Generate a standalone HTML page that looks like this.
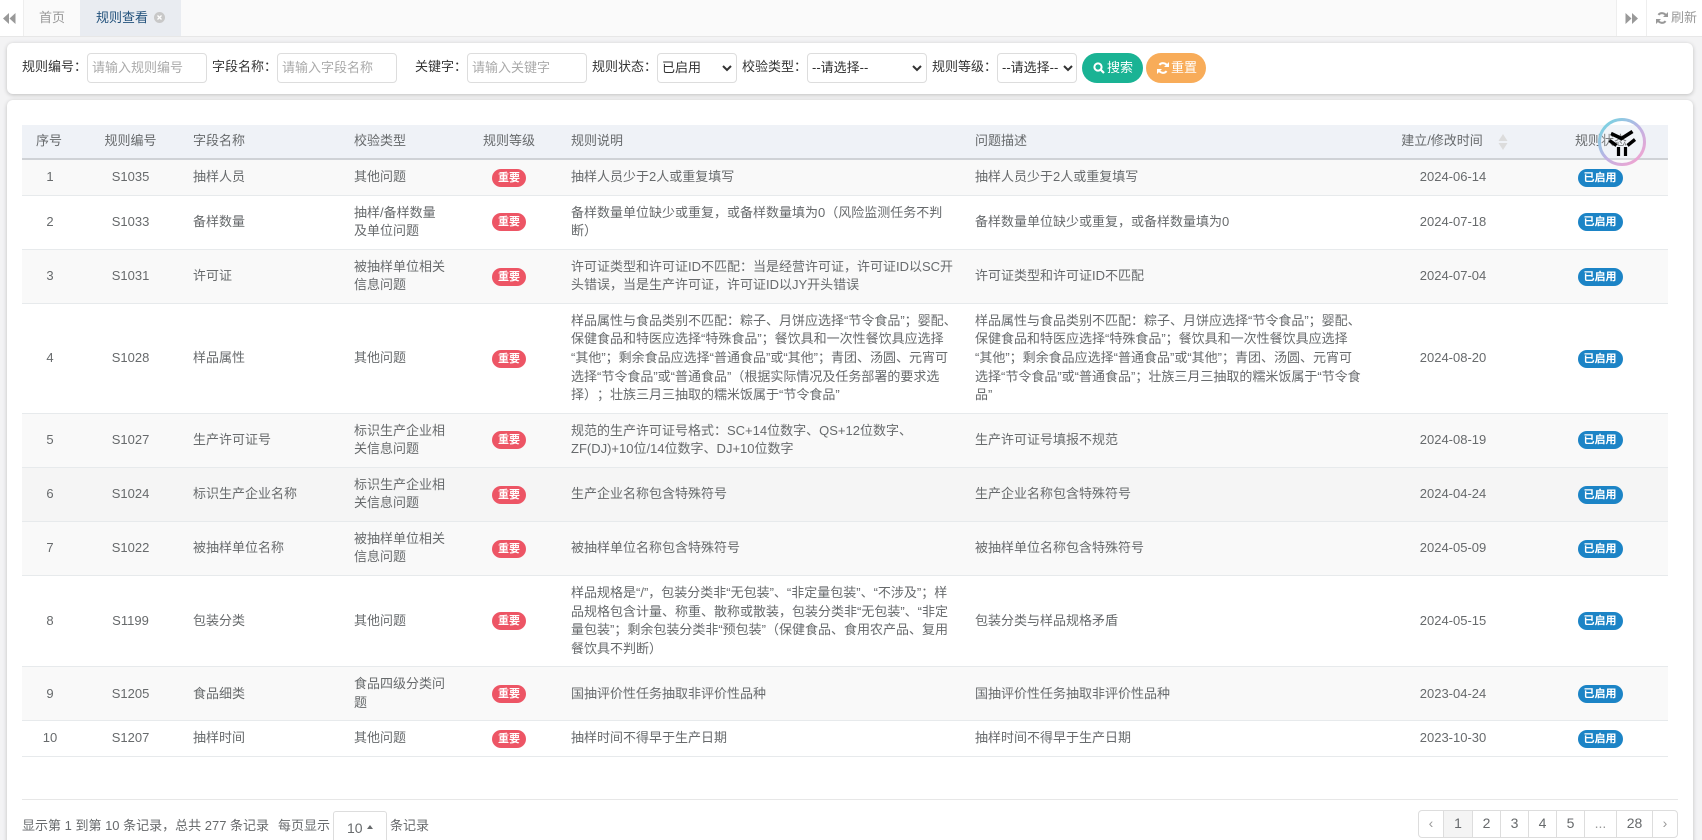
<!DOCTYPE html>
<html lang="zh">
<head>
<meta charset="utf-8">
<title>规则查看</title>
<style>
*{box-sizing:border-box}
html,body{margin:0;padding:0;width:1702px;height:840px;overflow:hidden;background:#f3f3f4}
body{font-family:"Liberation Sans","Noto Sans CJK SC",sans-serif;font-size:13px;color:#676a6c;position:relative;text-spacing-trim:space-all;font-feature-settings:"palt" 0}
.abs{position:absolute}
.top{left:0;top:0;width:1702px;height:37px;background:#fafafa;border-bottom:1px solid #e7e7e7}
.tw{top:0;height:36px;background:#fff}
.card{left:7px;width:1686px;background:#fff;border-radius:6px;box-shadow:0 1px 4px rgba(0,0,0,.22)}
.lb{top:57px;line-height:20px;color:#333;white-space:nowrap}
.in{top:53px;height:30px;border:1px solid #ddd;border-radius:4px;background:#fff;line-height:28px;padding-left:5px;color:#aaa;white-space:nowrap}
.in.ph{padding-left:4px}
.sel{color:#333;padding-left:4px}
.chev{position:absolute;right:4px;top:11px}
.btn{top:53px;height:30px;border-radius:15px;color:#fff;line-height:29px;white-space:nowrap}
table{position:absolute;left:22px;top:125px;width:1646px;border-collapse:collapse;table-layout:fixed;font-size:13px;line-height:18.57px}
th{height:34px;background:#eff2f7;border-bottom:2px solid #cfd2d6;font-weight:400;padding:0 8px;text-align:left;white-space:nowrap;color:#676a6c}
td{padding:8px;border-top:1px solid #e7eaec;vertical-align:middle;white-space:nowrap}
tbody tr:nth-child(odd) td{background:#f9f9f9}
tbody tr.hv td{background:#f5f5f5}
tbody tr:last-child td{border-bottom:1px solid #e7eaec}
tbody td:first-child{padding-left:10px}
.c{text-align:center}
.b{display:inline-block;font-size:11px;font-weight:700;color:#fff;line-height:12px;padding:3px 6px;border-radius:9px;vertical-align:middle}
.r{background:#ed5565}
.u{background:#1c84c6}
.pg{left:1418px;top:810px;width:260px;height:28px;border:1px solid #ddd;border-radius:4px;background:#fff}
.pg span{position:absolute;top:0;height:26px;line-height:25px;text-align:center;border-left:1px solid #ddd;font-size:14px}
.ft{top:816px;line-height:20px;white-space:nowrap}
</style>
</head>
<body>
<div class="abs top"></div>
<div class="abs tw" style="left:0;width:24px;border-right:1px solid #eee"></div>
<svg class="abs" style="left:3px;top:13px" width="13" height="11" viewBox="0 0 13 11"><path d="M6 0V11L0 5.500ZM12.500 0V11L6.500 5.500Z" fill="#999"/></svg>
<div class="abs" style="left:39px;top:8px;line-height:20px;color:#999">首页</div>
<div class="abs" style="left:80px;top:0;width:101px;height:36px;background:#e9ecf1"></div>
<div class="abs" style="left:96px;top:8px;line-height:20px;color:#23527c">规则查看</div>
<svg class="abs" style="left:154px;top:12px" width="11" height="11" viewBox="0 0 11 11"><circle cx="5.500" cy="5.500" r="5.500" fill="#c8c8c8"/><path d="M3.500 3.500L7.500 7.500M7.500 3.500L3.500 7.500" stroke="#fff" stroke-width="1.300"/></svg>
<div class="abs tw" style="left:1616px;width:86px;border-left:1px solid #eee"></div>
<div class="abs" style="left:1646px;top:0;width:1px;height:36px;background:#eee"></div>
<svg class="abs" style="left:1625px;top:13px" width="13" height="11" viewBox="0 0 13 11"><path d="M0.500 0V11L6.500 5.500ZM7 0V11L13 5.500Z" fill="#999"/></svg>
<svg class="abs" style="left:1656px;top:12px" width="12" height="12" viewBox="0 0 12 12"><path d="M10.300 4.200A4.600 4.600 0 0 0 2.400 2.900" fill="none" stroke="#999" stroke-width="2"/><path d="M1.700 7.800A4.600 4.600 0 0 0 9.600 9.100" fill="none" stroke="#999" stroke-width="2"/><path d="M12 0V5H7ZM0 12V7H5Z" fill="#999"/></svg>
<div class="abs" style="left:1671px;top:8px;line-height:20px;color:#999">刷新</div>

<div class="abs card" style="top:43px;height:51px"></div>
<div class="abs lb" style="left:22px">规则编号：</div>
<div class="abs in ph" style="left:87px;width:120px">请输入规则编号</div>
<div class="abs lb" style="left:212px">字段名称：</div>
<div class="abs in ph" style="left:277px;width:120px">请输入字段名称</div>
<div class="abs lb" style="left:415px">关键字：</div>
<div class="abs in ph" style="left:467px;width:120px">请输入关键字</div>
<div class="abs lb" style="left:592px">规则状态：</div>
<div class="abs in sel" style="left:657px;width:80px">已启用<svg class="chev" width="10" height="7" viewBox="0 0 10 7"><path d="M1 1L5 5L9 1" fill="none" stroke="#333" stroke-width="2"/></svg></div>
<div class="abs lb" style="left:742px">校验类型：</div>
<div class="abs in sel" style="left:807px;width:120px">--请选择--<svg class="chev" width="10" height="7" viewBox="0 0 10 7"><path d="M1 1L5 5L9 1" fill="none" stroke="#333" stroke-width="2"/></svg></div>
<div class="abs lb" style="left:932px">规则等级：</div>
<div class="abs in sel" style="left:997px;width:80px">--请选择--<svg class="chev" style="right:3px" width="10" height="7" viewBox="0 0 10 7"><path d="M1 1L5 5L9 1" fill="none" stroke="#333" stroke-width="2"/></svg></div>
<div class="abs btn" style="left:1082px;width:61px;background:#1ab394"><svg class="abs" style="left:11px;top:9px" width="12" height="12" viewBox="0 0 12 12"><circle cx="5" cy="5" r="3.600" fill="none" stroke="#fff" stroke-width="2"/><path d="M7.500 7.500L11 11" stroke="#fff" stroke-width="2.200"/></svg><span class="abs" style="left:25px">搜索</span></div>
<div class="abs btn" style="left:1146px;width:60px;background:#f8ac59"><svg class="abs" style="left:11px;top:9px" width="12" height="12" viewBox="0 0 12 12"><path d="M10.300 4.200A4.600 4.600 0 0 0 2.400 2.900" fill="none" stroke="#fff" stroke-width="2"/><path d="M1.700 7.800A4.600 4.600 0 0 0 9.600 9.100" fill="none" stroke="#fff" stroke-width="2"/><path d="M12 0V5H7ZM0 12V7H5Z" fill="#fff"/></svg><span class="abs" style="left:25px">重置</span></div>

<div class="abs card" style="top:100px;height:760px"></div>

<table>
<colgroup><col style="width:54px"><col style="width:109px"><col style="width:161px"><col style="width:109px"><col style="width:108px"><col style="width:404px"><col style="width:407px"><col style="width:158px"><col style="width:136px"></colgroup>
<thead><tr>
<th class="c">序号</th><th class="c">规则编号</th><th>字段名称</th><th>校验类型</th><th class="c">规则等级</th><th>规则说明</th><th>问题描述</th><th class="c" style="padding-right:30px">建立/修改时间</th><th class="c" style="padding-left:10px">规则状态</th>
</tr></thead>
<tbody>
<tr><td class="c">1</td><td class="c">S1035</td><td>抽样人员</td><td>其他问题</td><td class="c"><span class="b r">重要</span></td><td>抽样人员少于2人或重复填写</td><td>抽样人员少于2人或重复填写</td><td class="c">2024-06-14</td><td class="c"><span class="b u">已启用</span></td></tr>
<tr><td class="c">2</td><td class="c">S1033</td><td>备样数量</td><td>抽样/备样数量<br>及单位问题</td><td class="c"><span class="b r">重要</span></td><td>备样数量单位缺少或重复，或备样数量填为0（风险监测任务不判<br>断）</td><td>备样数量单位缺少或重复，或备样数量填为0</td><td class="c">2024-07-18</td><td class="c"><span class="b u">已启用</span></td></tr>
<tr><td class="c">3</td><td class="c">S1031</td><td>许可证</td><td>被抽样单位相关<br>信息问题</td><td class="c"><span class="b r">重要</span></td><td>许可证类型和许可证ID不匹配：当是经营许可证，许可证ID以SC开<br>头错误，当是生产许可证，许可证ID以JY开头错误</td><td>许可证类型和许可证ID不匹配</td><td class="c">2024-07-04</td><td class="c"><span class="b u">已启用</span></td></tr>
<tr><td class="c">4</td><td class="c">S1028</td><td>样品属性</td><td>其他问题</td><td class="c"><span class="b r">重要</span></td><td>样品属性与食品类别不匹配：粽子、月饼应选择“节令食品”；婴配、<br>保健食品和特医应选择“特殊食品”；餐饮具和一次性餐饮具应选择<br>“其他”；剩余食品应选择“普通食品”或“其他”；青团、汤圆、元宵可<br>选择“节令食品”或“普通食品”（根据实际情况及任务部署的要求选<br>择）；壮族三月三抽取的糯米饭属于“节令食品”</td><td>样品属性与食品类别不匹配：粽子、月饼应选择“节令食品”；婴配、<br>保健食品和特医应选择“特殊食品”；餐饮具和一次性餐饮具应选择<br>“其他”；剩余食品应选择“普通食品”或“其他”；青团、汤圆、元宵可<br>选择“节令食品”或“普通食品”；壮族三月三抽取的糯米饭属于“节令食<br>品”</td><td class="c">2024-08-20</td><td class="c"><span class="b u">已启用</span></td></tr>
<tr><td class="c">5</td><td class="c">S1027</td><td>生产许可证号</td><td>标识生产企业相<br>关信息问题</td><td class="c"><span class="b r">重要</span></td><td>规范的生产许可证号格式：SC+14位数字、QS+12位数字、<br>ZF(DJ)+10位/14位数字、DJ+10位数字</td><td>生产许可证号填报不规范</td><td class="c">2024-08-19</td><td class="c"><span class="b u">已启用</span></td></tr>
<tr class="hv"><td class="c">6</td><td class="c">S1024</td><td>标识生产企业名称</td><td>标识生产企业相<br>关信息问题</td><td class="c"><span class="b r">重要</span></td><td>生产企业名称包含特殊符号</td><td>生产企业名称包含特殊符号</td><td class="c">2024-04-24</td><td class="c"><span class="b u">已启用</span></td></tr>
<tr><td class="c">7</td><td class="c">S1022</td><td>被抽样单位名称</td><td>被抽样单位相关<br>信息问题</td><td class="c"><span class="b r">重要</span></td><td>被抽样单位名称包含特殊符号</td><td>被抽样单位名称包含特殊符号</td><td class="c">2024-05-09</td><td class="c"><span class="b u">已启用</span></td></tr>
<tr><td class="c">8</td><td class="c">S1199</td><td>包装分类</td><td>其他问题</td><td class="c"><span class="b r">重要</span></td><td>样品规格是“/”，包装分类非“无包装”、“非定量包装”、“不涉及”；样<br>品规格包含计量、称重、散称或散装，包装分类非“无包装”、“非定<br>量包装”；剩余包装分类非“预包装”（保健食品、食用农产品、复用<br>餐饮具不判断）</td><td>包装分类与样品规格矛盾</td><td class="c">2024-05-15</td><td class="c"><span class="b u">已启用</span></td></tr>
<tr><td class="c">9</td><td class="c">S1205</td><td>食品细类</td><td>食品四级分类问<br>题</td><td class="c"><span class="b r">重要</span></td><td>国抽评价性任务抽取非评价性品种</td><td>国抽评价性任务抽取非评价性品种</td><td class="c">2023-04-24</td><td class="c"><span class="b u">已启用</span></td></tr>
<tr><td class="c">10</td><td class="c">S1207</td><td>抽样时间</td><td>其他问题</td><td class="c"><span class="b r">重要</span></td><td>抽样时间不得早于生产日期</td><td>抽样时间不得早于生产日期</td><td class="c">2023-10-30</td><td class="c"><span class="b u">已启用</span></td></tr>
</tbody>
</table>

<svg class="abs" style="left:1498px;top:134px" width="10" height="16" viewBox="0 0 10 16"><path d="M5 0L9.500 7H0.500ZM5 16L0.500 9H9.500Z" fill="#dcdcdc"/></svg>

<svg class="abs" style="left:1596px;top:116px" width="52" height="52" viewBox="0 0 52 52">
<defs><linearGradient id="g" x1="0.150" y1="0.100" x2="0.850" y2="0.900"><stop offset="0" stop-color="#7fd0e2"/><stop offset="0.500" stop-color="#bcb3e4"/><stop offset="1" stop-color="#eca6d3"/></linearGradient></defs>
<circle cx="26" cy="26" r="22.500" fill="rgba(255,255,255,.15)" stroke="url(#g)" stroke-width="3"/>
<path d="M15 17.500L25.500 22.500L36.500 15.500" fill="none" stroke="#000" stroke-width="3.600"/>
<path d="M13.500 24.500L20.500 29.500M39 23.500L31.500 29.500" fill="none" stroke="#000" stroke-width="3.400"/>
<path d="M22.500 31V40M29.500 31V40" fill="none" stroke="#000" stroke-width="3.200"/>
</svg>

<div class="abs" style="left:22px;top:799px;width:1656px;height:1px;background:#e7e7e7"></div>
<div class="abs ft" style="left:22px">显示第 1 到第 10 条记录，总共 277 条记录</div>
<div class="abs ft" style="left:278px">每页显示</div>
<div class="abs" style="left:333px;top:811px;width:54px;height:40px;border:1px solid #ddd;border-radius:3px;background:#fff"></div>
<div class="abs ft" style="left:347px;top:818px;font-size:14px">10</div>
<div class="abs" style="left:367px;top:825px;width:0;height:0;border-left:3.500px solid transparent;border-right:3.500px solid transparent;border-bottom:4px solid #676a6c"></div>
<div class="abs ft" style="left:390px">条记录</div>

<div class="abs pg">
<span style="left:0;width:24px;border-left:0;color:#999">‹</span>
<span style="left:24px;width:29px;background:#f4f4f4">1</span>
<span style="left:53px;width:28px">2</span>
<span style="left:81px;width:28px">3</span>
<span style="left:109px;width:28px">4</span>
<span style="left:137px;width:28px">5</span>
<span style="left:165px;width:32px;color:#999">...</span>
<span style="left:197px;width:36px">28</span>
<span style="left:233px;width:25px;color:#999">›</span>
</div>
</body>
</html>
